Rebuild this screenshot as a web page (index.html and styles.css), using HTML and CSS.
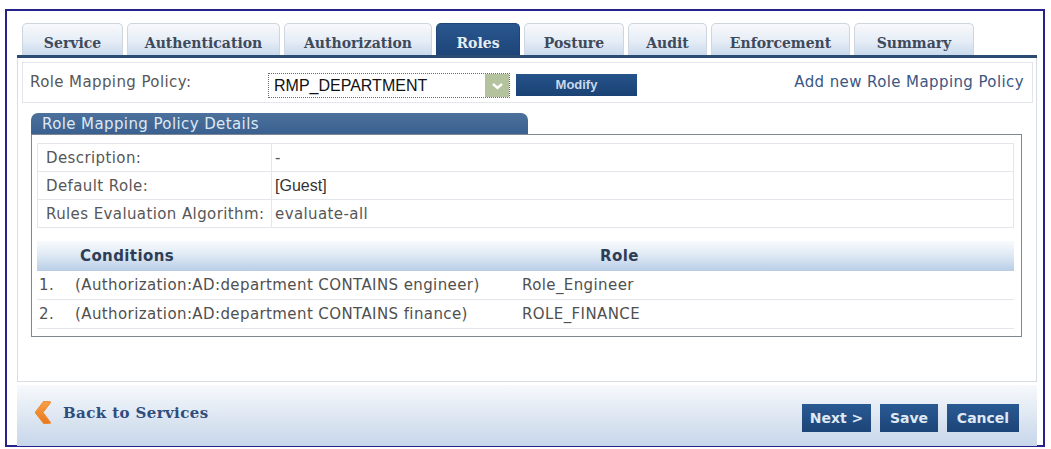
FILE: index.html
```html
<!DOCTYPE html>
<html lang="en">
<head>
    <meta charset="UTF-8">
    <title>Service - Roles</title>
    <link rel="stylesheet" href="styles.css">
</head>
<body>
    <div class="frame">
        <ul class="tabs">
            <li class="tab tab-service">Service</li>
            <li class="tab tab-auth">Authentication</li>
            <li class="tab tab-authz">Authorization</li>
            <li class="tab tab-roles active">Roles</li>
            <li class="tab tab-posture">Posture</li>
            <li class="tab tab-audit">Audit</li>
            <li class="tab tab-enf">Enforcement</li>
            <li class="tab tab-summary">Summary</li>
        </ul>

        <div class="content">
            <div class="policy-row">
                <label class="policy-label">Role Mapping Policy:</label>
                <div class="select">
                    <span class="select-value">RMP_DEPARTMENT</span>
                    <span class="select-arrow">
                        <svg width="13" height="10" viewBox="0 0 13 10"><polyline points="2,3 6.5,7 11,3" fill="none" stroke="#ffffff" stroke-width="2.4"/></svg>
                    </span>
                </div>
                <button class="btn-modify">Modify</button>
                <a class="add-link">Add new Role Mapping Policy</a>
            </div>

            <div class="panel">
                <div class="panel-title">Role Mapping Policy Details</div>
                <div class="panel-body">
                    <table class="details">
                        <tr><td class="lbl">Description:</td><td class="val">-</td></tr>
                        <tr><td class="lbl">Default Role:</td><td class="val val-arial">[Guest]</td></tr>
                        <tr><td class="lbl">Rules Evaluation Algorithm:</td><td class="val">evaluate-all</td></tr>
                    </table>

                    <table class="rules">
                        <thead>
                            <tr><th class="th-cond">Conditions</th><th class="th-role">Role</th></tr>
                        </thead>
                        <tbody>
                            <tr><td class="cond"><span class="num">1.</span>(Authorization:AD:department CONTAINS engineer)</td><td class="role">Role_Engineer</td></tr>
                            <tr><td class="cond"><span class="num">2.</span>(Authorization:AD:department CONTAINS finance)</td><td class="role">ROLE_FINANCE</td></tr>
                        </tbody>
                    </table>
                </div>
            </div>
        </div>

        <div class="footer">
            <a class="back-link">
                <svg class="back-icon" width="16" height="23" viewBox="0 0 16 23">
                    <defs>
                        <linearGradient id="orange" x1="0" y1="0" x2="0" y2="1">
                            <stop offset="0" stop-color="#f7a04a"/>
                            <stop offset="1" stop-color="#e8761c"/>
                        </linearGradient>
                    </defs>
                    <polygon points="9,0 16,1 8,11.5 16,22 9,23 0,11.5" fill="url(#orange)" stroke="#f08a30" stroke-width="1" stroke-linejoin="round"/>
                </svg>
                Back to Services
            </a>
            <div class="footer-buttons">
                <button class="btn btn-next">Next &gt;</button>
                <button class="btn btn-save">Save</button>
                <button class="btn btn-cancel">Cancel</button>
            </div>
        </div>
    </div>
</body>
</html>
```

FILE: styles.css
```css
/* Pantalla de servicio - pestaña Roles */
body {
    margin: 0;
    padding: 9px 6px 0 5px;
    background-color: #ffffff;
    font-family: 'DejaVu Sans', sans-serif;
    color: #505050;
}

.frame {
    border: 2px solid #27228a;
    padding: 12px 6px 0 10px;
    height: 422px;
}

/* Pestañas */
.tabs {
    list-style: none;
    margin: 0;
    padding: 0 0 0 5px;
    display: flex;
    height: 32px;
    border-bottom: 3px solid #2c4b73;
}

.tab {
    height: 32px;
    box-sizing: border-box;
    margin-right: 4px;
    border: 1px solid #cdd5df;
    border-bottom: none;
    border-radius: 5px 5px 0 0;
    background: linear-gradient(to bottom, #f7f9fc 0%, #e6edf6 55%, #c9daee 100%);
    font-family: 'DejaVu Serif', serif;
    font-weight: bold;
    font-size: 14px;
    color: #3e4a5c;
    display: flex;
    align-items: center;
    justify-content: center;
    padding-top: 7px;
}

.tab-service { width: 101px; }
.tab-auth { width: 153px; }
.tab-authz { width: 148px; }
.tab-roles { width: 84px; }
.tab-posture { width: 100px; }
.tab-audit { width: 79px; }
.tab-enf { width: 139px; }
.tab-summary { width: 120px; }

.tab.active {
    background: linear-gradient(to bottom, #2a5790 0%, #1d4578 100%);
    border-color: #1d4578;
    color: #e6edf5;
}

/* Contenido */
.content {
    border: 1px solid #d8dde4;
    border-top: none;
    padding: 4px 3px 44px 4px;
}

.policy-row {
    display: flex;
    align-items: center;
    height: 37px;
    border: 1px solid #e3e7ec;
    padding-left: 7px;
    padding-top: 2px;
}

.policy-label {
    width: 238px;
    font-size: 15px;
    letter-spacing: 0.4px;
    color: #575757;
    margin-top: -4px;
}

.select {
    display: flex;
    width: 242px;
    height: 25px;
    box-sizing: border-box;
    border: 1px dotted #6a6a6a;
    background: #ffffff;
    margin-top: 4px;
}

.select-value {
    flex: 1;
    font-family: 'Liberation Sans', sans-serif;
    font-size: 16px;
    color: #111111;
    padding-left: 5px;
    line-height: 23px;
}

.select-arrow {
    width: 24px;
    background: #b4c29d;
    display: flex;
    align-items: center;
    justify-content: center;
}

.btn-modify {
    margin-left: 6px;
    width: 121px;
    height: 22px;
    border: none;
    background: linear-gradient(to bottom, #24538a, #1b4274);
    color: #c9d8ea;
    font-family: 'Liberation Sans', sans-serif;
    font-weight: bold;
    font-size: 13px;
    margin-top: 2px;
}

.add-link {
    margin-left: auto;
    margin-right: 8px;
    margin-top: -4px;
    font-size: 15px;
    letter-spacing: 0.4px;
    color: #3b5783;
}

/* Panel de detalles */
.panel {
    margin: 10px 11px 0 9px;
}

.panel-title {
    width: 497px;
    height: 21px;
    box-sizing: border-box;
    border-radius: 7px 7px 0 0;
    background: linear-gradient(to bottom, #4c719c, #3a6090);
    color: #dfe8f3;
    font-size: 15px;
    letter-spacing: 0.4px;
    line-height: 18px;
    padding: 2px 0 0 11px;
}

.panel-body {
    border: 1px solid #7f8892;
    padding: 8px 7px 7px 5px;
}

.details,
.rules {
    width: 100%;
    border-collapse: collapse;
}

.details td {
    height: 27px;
    padding: 0;
    border: 1px solid #e3e6ea;
    font-size: 15px;
    letter-spacing: 0.4px;
    color: #575757;
}

.details .lbl {
    width: 225px;
    padding-left: 8px;
}

.details .val {
    padding-left: 3px;
}

.details .val-arial {
    font-family: 'Liberation Sans', sans-serif;
    font-size: 16px;
    letter-spacing: 0;
    color: #333333;
}

.rules {
    margin-top: 13px;
}

.rules th {
    height: 30px;
    padding: 0;
    background: linear-gradient(to bottom, #f8fbfd 0%, #e0eaf5 45%, #b9cde6 100%);
    font-size: 15px;
    letter-spacing: 0.4px;
    font-weight: bold;
    color: #2e3d55;
    text-align: left;
}

.rules .th-cond {
    width: 442px;
    padding-left: 43px;
}

.rules .th-role {
    padding-left: 78px;
}

.rules td {
    height: 28px;
    padding: 0;
    border-bottom: 1px solid #e3e6ea;
    font-size: 15px;
    letter-spacing: 0.4px;
    color: #505050;
}

.rules .cond {
    padding-left: 2px;
}

.rules .num {
    display: inline-block;
    width: 36px;
}

/* Pie */
.footer {
    margin-top: 3px;
    height: 61px;
    display: flex;
    align-items: center;
    justify-content: space-between;
    background: linear-gradient(to bottom, #f7f9fc 0%, #e1e9f3 45%, #c6d6ea 100%);
    padding: 0 18px 0 18px;
}

.back-link {
    display: flex;
    align-items: center;
    gap: 12px;
    font-family: 'DejaVu Serif', serif;
    font-weight: bold;
    font-size: 15px;
    letter-spacing: 0.4px;
    color: #2f4c7c;
    margin-top: -6px;
}

.footer-buttons {
    display: flex;
    gap: 9px;
    margin-top: 4px;
}

.btn {
    height: 28px;
    border: none;
    background: linear-gradient(to bottom, #2a5a93, #1c4477);
    color: #dfe8f3;
    font-family: 'DejaVu Sans', sans-serif;
    font-weight: bold;
    font-size: 14px;
    padding: 0;
}

.btn-next { width: 69px; }
.btn-save { width: 58px; }
.btn-cancel { width: 72px; }
```
